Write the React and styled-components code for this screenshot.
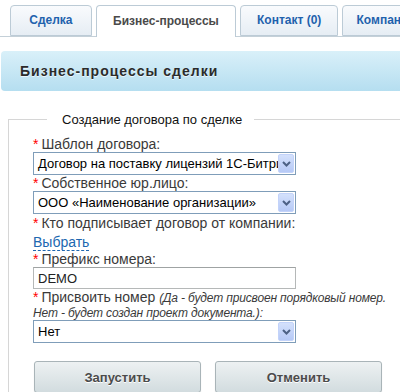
import React from 'react';
import styled, { createGlobalStyle } from 'styled-components';

const GlobalStyle = createGlobalStyle`
body {
    margin: 0;
    background: #fff;
    font-family: "Liberation Sans", Arial, sans-serif;
    overflow: hidden;
}
`;

const Page = styled.div`
width: 430px;
`;

const TabsRow = styled.div`
display: flex;
align-items: flex-end;
gap: 4px;
padding: 5px 0 0 10px;
height: 31px;
border-bottom: 1px solid #c4d0d8;
`;

const Tab = styled.div`
box-sizing: border-box;
width: ${p => p.width}px;
height: ${p => (p.active ? 32 : 31)}px;
margin-bottom: ${p => (p.active ? -1 : 0)}px;
display: flex;
align-items: center;
justify-content: center;
padding-bottom: 2px;
border: 1px solid #bccbd6;
border-bottom: ${p => (p.active ? 'none' : '1px solid #bccbd6')};
border-radius: 4px 4px 0 0;
background: ${p => (p.active ? '#fff' : 'linear-gradient(#f9fbfd, #e6edf4)')};
color: ${p => (p.active ? '#4a4a4a' : '#1f62ad')};
font-size: 12px;
font-weight: bold;
white-space: nowrap;
overflow: hidden;
`;

const HeaderBar = styled.div`
margin: 14px 0 0 1px;
height: 40px;
display: flex;
align-items: center;
padding-left: 19px;
border-radius: 4px;
background: linear-gradient(#d9f0f9, #b5def0);
color: #2b2b2b;
font-size: 14px;
font-weight: bold;
letter-spacing: 1px;
text-shadow: 0 1px 0 rgba(255, 255, 255, 0.7);
`;

const Fieldset = styled.fieldset`
margin: 21px 0 0 8px;
padding: 10px 0 40px 24px;
border: none;
border-top: 1px solid #d6d6d6;
border-left: 1px solid #d6d6d6;
min-width: 0;
`;

const Legend = styled.legend`
margin-left: 14px;
padding: 0 12px 0 15px;
font-size: 13px;
color: #111;
`;

const Form = styled.div`
display: flex;
flex-direction: column;
align-items: flex-start;
`;

const Label = styled.div`
font-size: 14px;
line-height: ${p => p.lh || 15}px;
color: #3a3a3a;
white-space: nowrap;
margin-top: ${p => p.mt || 0}px;
`;

const Star = styled.span`
color: #ff0000;
margin-right: 3px;
`;

const Hint = styled.i`
font-size: 12px;
letter-spacing: -0.15px;
color: #3a3a3a;
`;

const SelectBox = styled.div`
box-sizing: border-box;
width: 263px;
height: 23px;
margin-top: ${p => p.mt || 0}px;
display: flex;
align-items: center;
border: 1px solid #7f9db9;
background: #fff;
padding: 1px;
`;

const SelectText = styled.div`
flex: 1;
min-width: 0;
padding-left: 3px;
font-size: 13px;
color: #000;
white-space: nowrap;
overflow: hidden;
`;

const ArrowBtn = styled.div`
width: 16px;
height: 19px;
flex: none;
display: flex;
align-items: center;
justify-content: center;
border-radius: 2px;
background: linear-gradient(#d4e1fc, #b6c9f6);
border: 1px solid #c3d3fa;
box-sizing: border-box;
`;

const TextInput = styled.div`
box-sizing: border-box;
width: 263px;
height: 22px;
display: flex;
align-items: center;
padding-left: 4px;
border: 1px solid #b5b8b8;
border-top-color: #9fa3a3;
font-size: 13px;
color: #222;
`;

const Link = styled.a`
margin: 4px 0 1px;
font-size: 14px;
line-height: 15px;
color: #2067b0;
text-decoration: none;
border-bottom: 1px dashed #2067b0;
`;

const Buttons = styled.div`
display: flex;
gap: 14px;
margin: 18px 0 0 1px;
`;

const Button = styled.div`
box-sizing: border-box;
width: 167px;
height: 32px;
display: flex;
align-items: center;
justify-content: center;
border: 1px solid #a9b4b8;
border-radius: 3px;
background: linear-gradient(#edf1f2, #d2dcdf);
box-shadow: 0 1px 1px rgba(0, 0, 0, 0.15);
color: #4b4b4b;
font-size: 13px;
font-weight: bold;
text-shadow: 0 1px 0 #fff;
`;

const Chevron = () => (
    <svg width="9" height="6" viewBox="0 0 9 6">
        <path d="M1 1 L4.5 4.5 L8 1" fill="none" stroke="#4d6185" strokeWidth="2" />
    </svg>
);

const Select = ({ value, mt }) => (
    <SelectBox mt={mt}>
        <SelectText>{value}</SelectText>
        <ArrowBtn><Chevron /></ArrowBtn>
    </SelectBox>
);

const App = () => {
    return (
        <>
            <GlobalStyle />
            <Page>
                <TabsRow>
                    <Tab width={84}>Сделка</Tab>
                    <Tab width={144} active>Бизнес-процессы</Tab>
                    <Tab width={101}>Контакт (0)</Tab>
                    <Tab width={90}>Компании</Tab>
                </TabsRow>

                <HeaderBar>Бизнес-процессы сделки</HeaderBar>

                <Fieldset>
                    <Legend>Создание договора по сделке</Legend>
                    <Form>
                        <Label><Star>*</Star>Шаблон договора:</Label>
                        <Select value="Договор на поставку лицензий 1С-Битрикс" />
                        <Label mt={1}><Star>*</Star>Собственное юр.лицо:</Label>
                        <Select value="ООО «Наименование организации»" />
                        <Label mt={2}><Star>*</Star>Кто подписывает договор от компании:</Label>
                        <Link href="#">Выбрать</Link>
                        <Label><Star>*</Star>Префикс номера:</Label>
                        <TextInput>DEMO</TextInput>
                        <Label mt={1} lh={14}>
                            <Star>*</Star>Присвоить номер <Hint>(Да - будет присвоен порядковый номер.<br />Нет - будет создан проект документа.):</Hint>
                        </Label>
                        <Select value="Нет" />
                    </Form>
                    <Buttons>
                        <Button>Запустить</Button>
                        <Button>Отменить</Button>
                    </Buttons>
                </Fieldset>
            </Page>
        </>
    );
};

export default App;
